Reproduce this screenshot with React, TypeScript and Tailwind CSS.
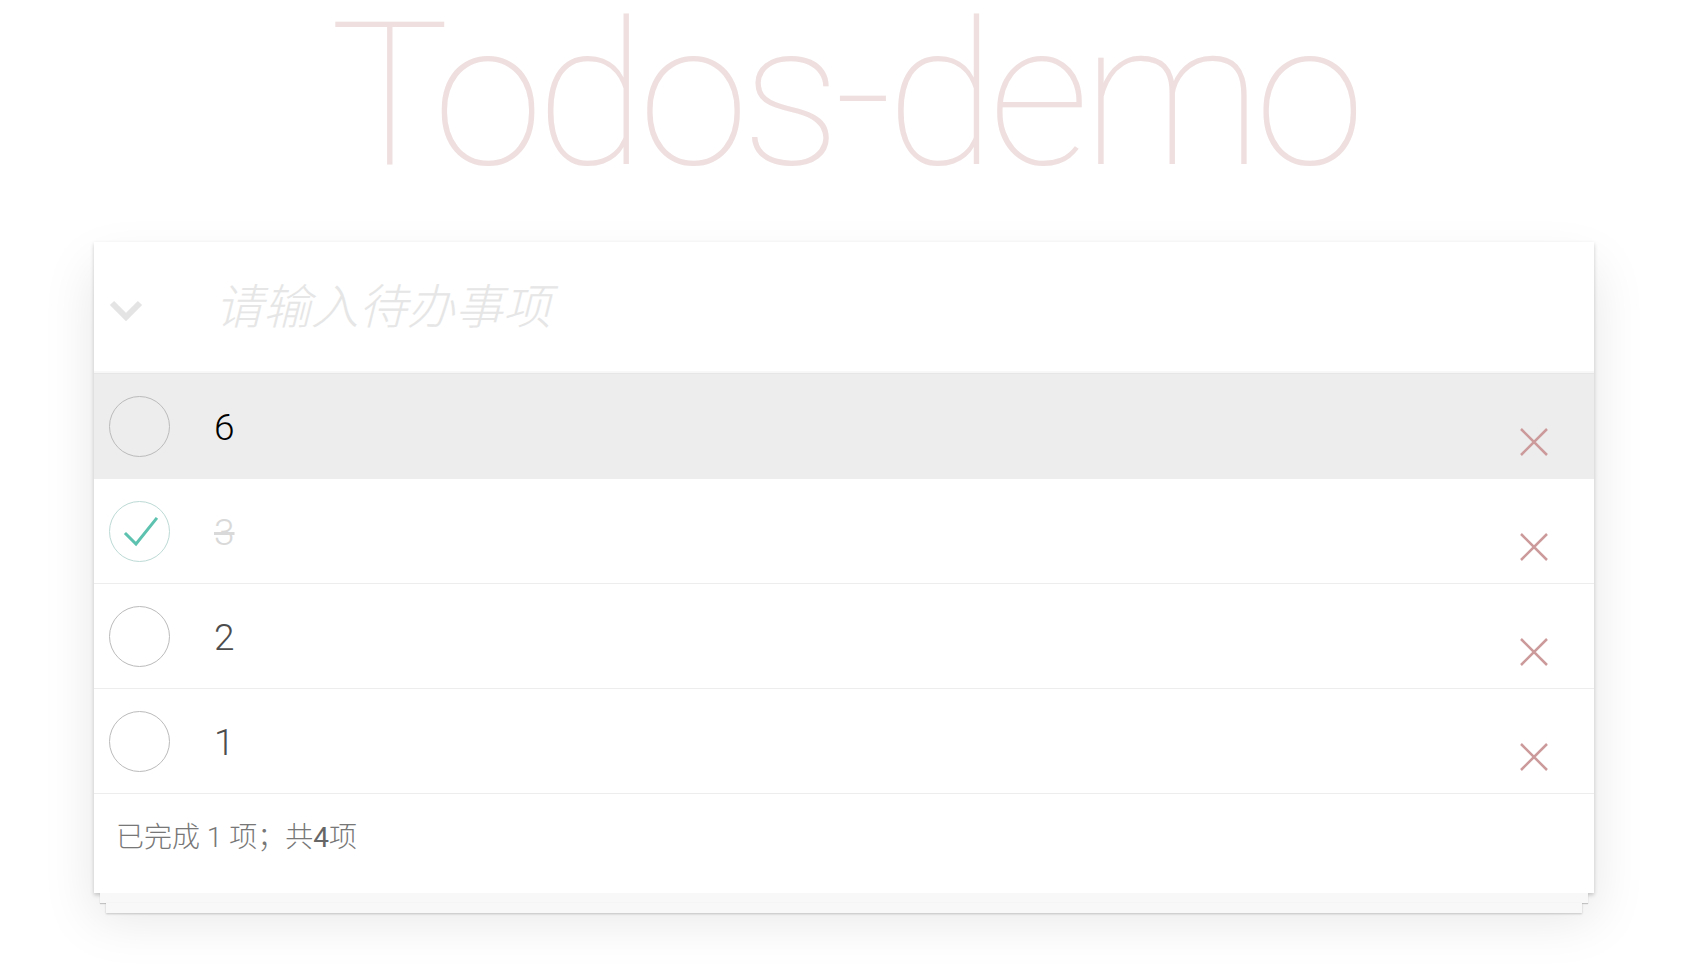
const todos = [
  { id: 6, title: "6", done: false, hover: true },
  { id: 3, title: "3", done: true, hover: false },
  { id: 2, title: "2", done: false, hover: false },
  { id: 1, title: "1", done: false, hover: false },
];

const sans = "font-['Roboto','Noto_Sans_CJK_SC',sans-serif]";

function Circle({ done }: { done: boolean }) {
  return (
    <div
      className={
        "flex h-[61px] w-[61px] items-center justify-center rounded-full border " +
        (done ? "border-[#bddad5]" : "border-[#bbbbbb]")
      }
    >
      {done && (
        <svg width="40" height="40" viewBox="0 0 40 40" fill="none">
          <path d="M6 23 L16 33 L36 8" stroke="#5dc2af" strokeWidth="3" strokeLinecap="square" />
        </svg>
      )}
    </div>
  );
}

function Cross() {
  return (
    <svg width="28" height="28" viewBox="0 0 28 28" fill="none" className="mt-[32px]">
      <path d="M1 1 L27 27 M27 1 L1 27" stroke="#cc9a9a" strokeWidth="2.5" />
    </svg>
  );
}

export default function App() {
  return (
    <div className={`min-h-screen bg-white ${sans}`}>
      <div className="w-[1688px]">
        <h1 className="flex h-[242px] justify-center pt-[11px] text-[200px] leading-[234px] font-thin tracking-[-7px] text-[#efdfdf] font-['Roboto',sans-serif]">
          <span className="-mt-[32px]">Todos-demo</span>
        </h1>

        <div className="mx-auto w-[1500px]">
          <section className="bg-white shadow-[0_2px_4px_0_rgba(0,0,0,0.2),0_25px_50px_0_rgba(0,0,0,0.1)]">
            <div className="flex h-[131px] items-center shadow-[inset_0_-2px_1px_rgba(0,0,0,0.03)]">
              <div className="flex w-[64px] justify-center">
                <svg width="34" height="22" viewBox="0 0 34 22" fill="none" className="mt-[6px]">
                  <path d="M3 3 L17 17 L31 3" stroke="#e4e4e4" strokeWidth="6" />
                </svg>
              </div>
              <span className="pl-[57px] text-[48px] font-light italic text-[#e6e6e6]">
                请输入待办事项
              </span>
            </div>

            <ul className="border-t border-[#e6e6e6]">
              {todos.map((t) => (
                <li
                  key={t.id}
                  className={
                    "flex h-[105px] items-center border-b border-[#ededed] " +
                    (t.hover ? "bg-[#ededed]" : "bg-white")
                  }
                >
                  <div className="pl-[15px]">
                    <Circle done={t.done} />
                  </div>
                  <span
                    className={
                      "mt-[4px] flex-1 pl-[44px] text-[37px] font-light " +
                      (t.done
                        ? "text-[#d9d9d9] line-through"
                        : t.hover
                          ? "text-black"
                          : "text-[#4d4d4d]")
                    }
                  >
                    {t.title}
                  </span>
                  <div className="pr-[46px]">
                    <Cross />
                  </div>
                </li>
              ))}
            </ul>

            <footer className="flex h-[99px] items-center px-[22px] pb-[12px] text-[28px] font-light text-[#777777]">
              <span>
                已完成 1 项；共<strong className="font-normal text-[#666666]">4</strong>项
              </span>
            </footer>
          </section>
          <div className="mx-[6px] h-[10px] bg-[#f8f8f8] shadow-[0_1px_1px_rgba(0,0,0,0.2)]" />
          <div className="mx-[12px] h-[10px] bg-[#f8f8f8] shadow-[0_1px_2px_rgba(0,0,0,0.2)]" />
        </div>
      </div>
    </div>
  );
}
